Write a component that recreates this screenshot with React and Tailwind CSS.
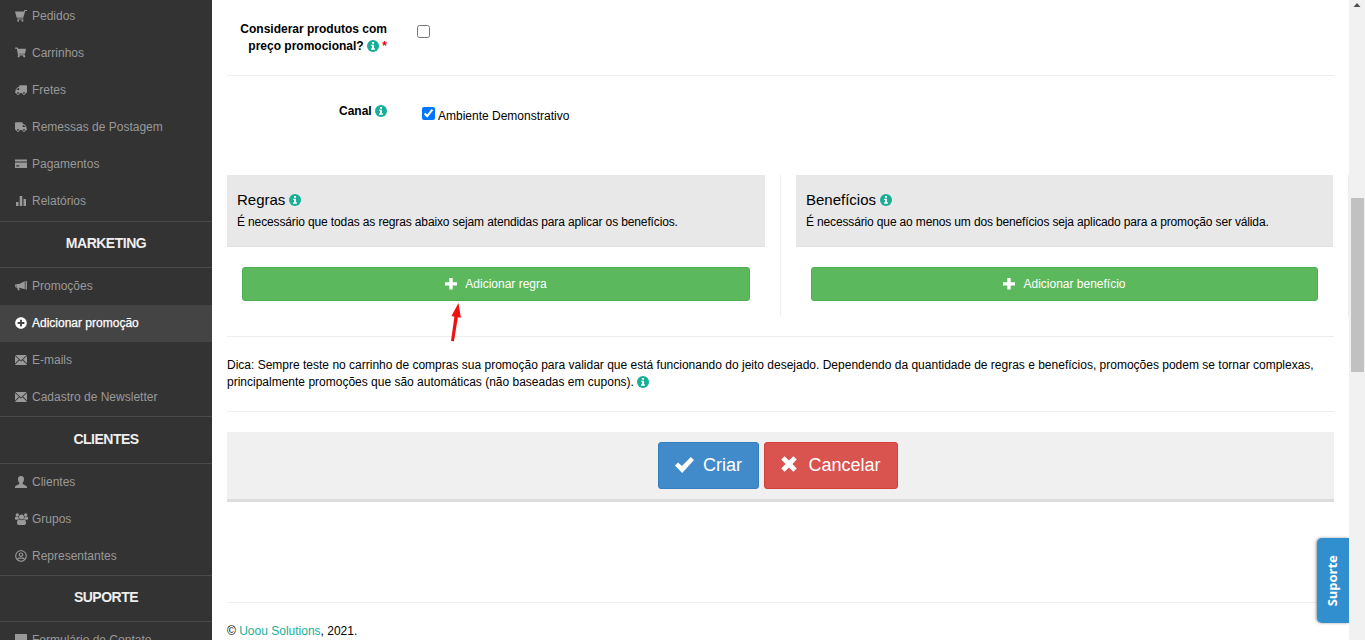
import React from 'react';
import { FaShoppingCart, FaTruck, FaPlusCircle, FaRegUserCircle } from 'react-icons/fa';

const Glyph = ({ children, size = 12, className = '' }) => (
  <svg width={size} height={size} viewBox="0 0 12 12" fill="currentColor" className={className}>
    {children}
  </svg>
);

const OrderIcon = () => (
  <Glyph>
    <path d="M0 1.500h8.900l.5-1.500H12v1.100h-1.800L8.200 7.700H1.700zM2 8.500h6.500v1H2z" />
    <circle cx="3.200" cy="10.700" r="1" />
    <circle cx="7.400" cy="10.700" r="1" />
  </Glyph>
);

const CardIcon = () => (
  <Glyph>
    <path fillRule="evenodd" d="M0 1.5h12V3.500H0zM0 4.500h12V10H0zM1.300 7.200v1.300h3V7.200z" />
  </Glyph>
);

const ChartIcon = () => (
  <Glyph>
    <path d="M1 7h2.500v4H1zM4.700 1h2.600v10H4.700zM8.500 4H11v7H8.500z" />
  </Glyph>
);

const BullhornIcon = () => (
  <Glyph>
    <path d="M0 4.300h.8v3H0zM1.300 4H4l5.800-2.700v8L4.400 7.800H4l.7 2.400H3L2.200 7.800h-.9zM10.500 1h1.400v8.600h-1.400z" />
  </Glyph>
);

const MailIcon = () => (
  <Glyph>
    <path d="M.3 1h11.400L6 6.400zM0 1.900l3.900 3.700L0 9.500zM12 1.900L8.100 5.600 12 9.500zM4.500 6.200L6 7.600l1.500-1.400 4.300 4.300v.5H.2v-.5z" />
  </Glyph>
);

const UserIcon = () => (
  <Glyph>
    <path d="M6 0c1.900 0 3 1.200 3 3.100 0 1.700-.5 2.800-1.300 3.700v1.100c.3.6 4.300 1.500 4.300 3.100v1H0v-1c0-1.600 4-2.500 4.300-3.100V6.800C3.500 5.900 3 4.800 3 3.100 3 1.200 4.100 0 6 0z" />
  </Glyph>
);

const GroupIcon = () => (
  <svg width="13" height="12" viewBox="0 0 13 12" fill="currentColor">
    <circle cx="2.300" cy="2" r="1.700" />
    <circle cx="10.700" cy="2" r="1.700" />
    <circle cx="6.500" cy="4" r="2.500" />
    <path d="M0 6V4.500C0 3.700.8 3.500 1.500 3.800c.6.3 1.300.2 1.700 0 .1 1 .4 1.700 1 2.200-.8 0-1.300.3-1.700.8H1C.4 6.800 0 6.500 0 6zM13 6V4.500c0-.8-.8-1-1.500-.7-.6.3-1.300.2-1.700 0-.1 1-.4 1.700-1 2.200.8 0 1.300.3 1.700.8H12c.6 0 1-.3 1-.8zM4.300 6.500c1.300.9 3.100.9 4.400 0C10.500 6.600 11 8.200 11 10c0 1.300-.7 2-1.800 2H3.800C2.700 12 2 11.300 2 10c0-1.800.5-3.400 2.300-3.500z" />
  </svg>
);

const FormIcon = () => (
  <Glyph>
    <path d="M0 0h12v8H6l-3 3V8H0z" />
  </Glyph>
);

const PlusIcon = () => (
  <Glyph>
    <path d="M4.300 0h3.400v4.300H12v3.200H7.700v4H4.300v-4H0V4.300h4.300z" />
  </Glyph>
);

const CheckIcon = () => (
  <svg width="19" height="16" viewBox="0 0 19 16" fill="currentColor" className="-mt-[2px]">
    <path d="M0 8.500l3-3 4 3.600L15.800 0 19 3.100 7.200 16z" />
  </svg>
);

const CrossIcon = () => (
  <Glyph size={16} className="-mt-1">
    <path d="M2.700.2L6 3.300 9.300.2l2.500 2.500L8.600 6l3.200 3.300-2.500 2.500L6 8.700l-3.300 3.100L.2 9.300 3.400 6 .2 2.700z" />
  </Glyph>
);

const orderItems = [
  { label: 'Pedidos', icon: <OrderIcon /> },
  { label: 'Carrinhos', icon: <FaShoppingCart size={11} /> },
  { label: 'Fretes', icon: <FaTruck size={12} className="-scale-x-100" /> },
  { label: 'Remessas de Postagem', icon: <FaTruck size={12} /> },
  { label: 'Pagamentos', icon: <CardIcon /> },
  { label: 'Relatórios', icon: <ChartIcon /> },
];

const marketingItems = [
  { label: 'Promoções', icon: <BullhornIcon /> },
  { label: 'Adicionar promoção', icon: <FaPlusCircle size={12} />, active: true },
  { label: 'E-mails', icon: <MailIcon /> },
  { label: 'Cadastro de Newsletter', icon: <MailIcon /> },
];

const clientItems = [
  { label: 'Clientes', icon: <UserIcon /> },
  { label: 'Grupos', icon: <GroupIcon /> },
  { label: 'Representantes', icon: <FaRegUserCircle size={12} /> },
];

const supportItems = [{ label: 'Formulário de Contato', icon: <FormIcon /> }];

function MenuList({ items }) {
  return (
    <ul>
      {items.map((item) => (
        <li
          key={item.label}
          className={
            item.active
              ? 'flex h-[37px] items-center bg-[#444] pb-[2px] pl-[15px] text-white [-webkit-text-stroke:0.25px_white]'
              : 'flex h-[37px] items-center pb-[2px] pl-[15px] text-[#999]'
          }
        >
          <span className="flex w-[17px] shrink-0">{item.icon}</span>
          <span className="whitespace-nowrap">{item.label}</span>
        </li>
      ))}
    </ul>
  );
}

function MenuTitle({ children, className = 'h-[47px]' }) {
  return (
    <h3 className={`flex items-center justify-center border-y border-[#4a4a4a] pb-[2px] text-[14px] font-bold tracking-[-0.5px] text-[#eee] ${className}`}>
      {children}
    </h3>
  );
}

function Info() {
  return (
    <svg width="12" height="12" viewBox="0 0 12 12" className="inline-block shrink-0 align-[-2px]">
      <circle cx="6" cy="6" r="6" fill="#18ae97" />
      <path d="M5 2h2v1.700H5zM4.200 4.700H7v3.600h.9v1.400H4.100V8.300H5V6.100h-.8z" fill="#fff" />
    </svg>
  );
}

function RuleBox({ title, text, button, textClass }) {
  return (
    <div>
      <div className="h-[72px] border-b border-[#e2e2e2] bg-[#e8e8e8] pl-[10px] pt-[14px]">
        <h4 className="flex h-[22px] items-center gap-1 text-[15px]">
          {title} <Info />
        </h4>
        <p className={`mt-[3px] leading-[17px] whitespace-nowrap ${textClass}`}>{text}</p>
      </div>
      <div className="px-[15px] pt-5">
        <button className="flex h-[34px] w-full items-center justify-center gap-2 rounded-[3px] border border-[#4cae4c] bg-[#5cb85c] text-white">
          <PlusIcon />
          {button}
        </button>
      </div>
    </div>
  );
}

export default function App() {
  return (
    <div className="relative flex h-[640px] w-[1365px] overflow-hidden bg-white font-['Liberation_Sans',Arial,sans-serif] text-[12px] text-black">
      {/* Sidebar */}
      <aside className="-mt-[2px] h-[642px] w-[212px] shrink-0 overflow-hidden bg-[#333]">
        <MenuList items={orderItems} />
        <MenuTitle className="mt-px h-[47px]">MARKETING</MenuTitle>
        <MenuList items={marketingItems} />
        <MenuTitle className="h-[48px]">CLIENTES</MenuTitle>
        <MenuList items={clientItems} />
        <MenuTitle>SUPORTE</MenuTitle>
        <MenuList items={supportItems} />
      </aside>

      {/* Form */}
      <main className="w-[1137px] shrink-0 pl-[15px]">
        <div className="mr-[15px] flex h-[76px] border-b border-[#eee] pt-[21px]">
          <label className="w-[160px] text-right leading-[17px] font-bold">
            Considerar produtos com
            <br />
            preço promocional? <Info /> <span className="text-red-600">*</span>
          </label>
          <input type="checkbox" className="mt-1 ml-[30px] h-[13px] w-[13px]" />
        </div>

        <div className="flex h-[99px] pt-[27px]">
          <label className="w-[160px] text-right leading-[17px] font-bold">
            Canal <Info />
          </label>
          <label className="ml-[35px] flex gap-[3px] leading-[17px]">
            <input type="checkbox" defaultChecked className="mt-1 h-[13px] w-[13px]" />
            <span className="pt-[5px]">Ambiente Demonstrativo</span>
          </label>
        </div>

        <div className="flex h-[141px]">
          <div className="w-[554px] border-r border-[#eee] pr-[15px]">
            <RuleBox
              title="Regras"
              text="É necessário que todas as regras abaixo sejam atendidas para aplicar os benefícios."
              textClass="tracking-[-0.13px]"
              button="Adicionar regra"
            />
          </div>
          <div className="w-[568px] border-r border-[#eee] pr-[15px] pl-[15px]">
            <RuleBox
              title="Benefícios"
              text="É necessário que ao menos um dos benefícios seja aplicado para a promoção ser válida."
              textClass="tracking-[-0.145px]"
              button="Adicionar benefício"
            />
          </div>
        </div>

        <div className="mt-5 mr-[15px] h-[76px] border-y border-[#eee] pt-5 leading-[17px]">
          <p className="whitespace-nowrap">
            Dica: Sempre teste no carrinho de compras sua promoção para validar que está funcionando do jeito desejado. Dependendo da quantidade de regras e benefícios, promoções podem se tornar complexas,
          </p>
          <p>
            principalmente promoções que são automáticas (não baseadas em cupons). <Info />
          </p>
        </div>

        <div className="mt-5 mr-[15px] flex h-[70px] justify-center gap-[5px] border-b-3 border-[#ddd] bg-[#f0f0f0] pt-[10px] pr-[5px] text-[18px] text-white">
          <button className="flex h-[47px] w-[101px] items-center justify-center gap-[9px] rounded-[3px] border border-[#357ebd] bg-[#428bca]">
            <CheckIcon />
            Criar
          </button>
          <button className="flex h-[47px] w-[134px] items-center justify-center gap-[11px] rounded-[3px] border border-[#d43f3a] bg-[#d9534f]">
            <CrossIcon />
            Cancelar
          </button>
        </div>

        <footer className="mt-[100px] mr-[15px] border-t border-[#eee] pt-5 leading-[17px]">
          © <a className="text-[#18ae97]">Uoou Solutions</a>, 2021.
        </footer>
      </main>

      {/* Scrollbar */}
      <div className="w-4 shrink-0 bg-[#f1f1f1] pt-[3px]">
        <svg width="16" height="4" viewBox="0 0 16 4" fill="#505050" className="block">
          <path d="M8 0l3.500 4h-7z" />
        </svg>
        <div className="mt-[191px] ml-[2px] h-[174px] w-[13px] bg-[#c1c1c1]" />
      </div>

      {/* Pointer to the add rule button */}
      <svg className="absolute top-[302px] left-[448px]" width="16" height="40" viewBox="0 0 16 40" fill="#ee1111">
        <path d="M10.500 1L12.900 15.700 9.900 15.200 6 39.200 3 39 6.400 14.700 3.500 14z" />
      </svg>

      {/* Support tab */}
      <div className="absolute top-[538px] left-[1317px] flex h-[85px] w-8 items-center justify-center rounded-l-[5px] bg-[#318fd0] font-['Noto_Sans',sans-serif] text-[13px] font-bold text-white shadow-[-1px_0_3px_rgba(0,0,0,0.4)] [clip-path:inset(-6px_0_-6px_-6px)]">
        <span className="-rotate-90">Suporte</span>
      </div>
    </div>
  );
}
